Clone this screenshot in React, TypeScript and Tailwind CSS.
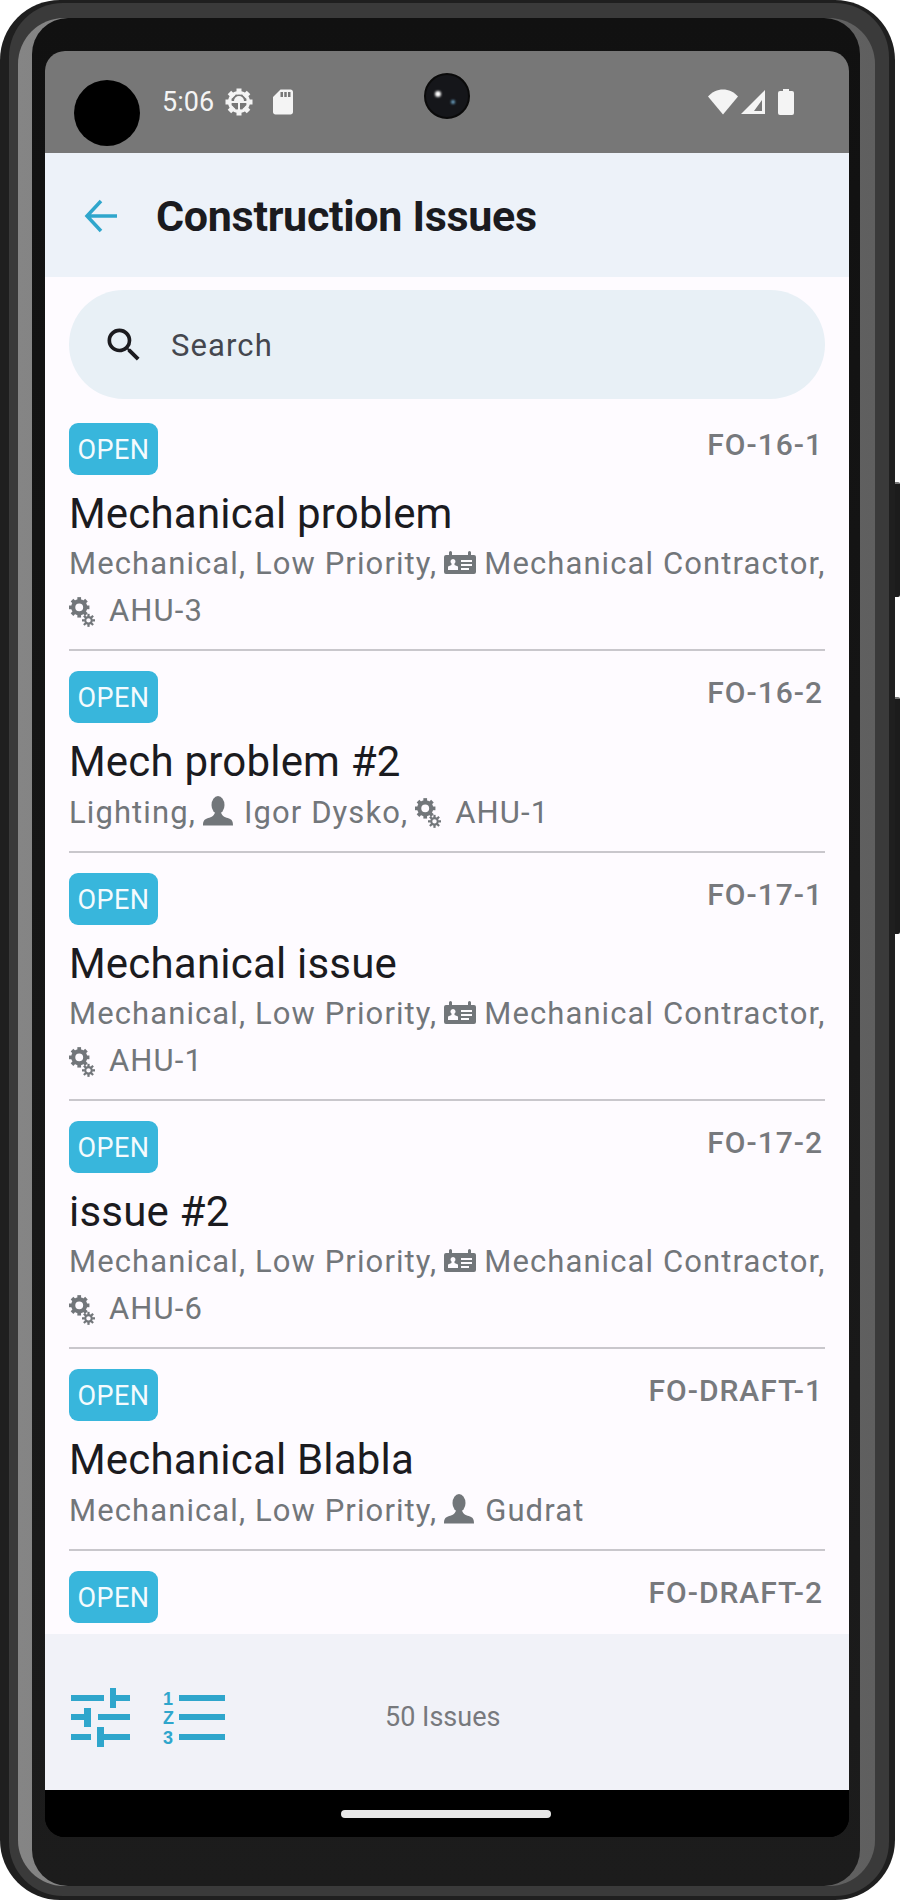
import { MdSdCard, MdSearch } from "react-icons/md";

type Meta = { kind: "text" | "card" | "user" | "gears"; label: string };

type Issue = {
  id: string;
  title: string;
  lines: Meta[][];
};

const issues: Issue[] = [
  {
    id: "FO-16-1",
    title: "Mechanical problem",
    lines: [
      [
        { kind: "text", label: "Mechanical, Low Priority," },
        { kind: "card", label: "Mechanical Contractor," },
      ],
      [{ kind: "gears", label: "AHU-3" }],
    ],
  },
  {
    id: "FO-16-2",
    title: "Mech problem #2",
    lines: [
      [
        { kind: "text", label: "Lighting," },
        { kind: "user", label: "Igor Dysko," },
        { kind: "gears", label: "AHU-1" },
      ],
    ],
  },
  {
    id: "FO-17-1",
    title: "Mechanical issue",
    lines: [
      [
        { kind: "text", label: "Mechanical, Low Priority," },
        { kind: "card", label: "Mechanical Contractor," },
      ],
      [{ kind: "gears", label: "AHU-1" }],
    ],
  },
  {
    id: "FO-17-2",
    title: "issue #2",
    lines: [
      [
        { kind: "text", label: "Mechanical, Low Priority," },
        { kind: "card", label: "Mechanical Contractor," },
      ],
      [{ kind: "gears", label: "AHU-6" }],
    ],
  },
  {
    id: "FO-DRAFT-1",
    title: "Mechanical Blabla",
    lines: [
      [
        { kind: "text", label: "Mechanical, Low Priority," },
        { kind: "user", label: "Gudrat" },
      ],
    ],
  },
];

const angles = [0, 45, 90, 135, 180, 225, 270, 315];

function CardIcon() {
  return (
    <svg width="32" height="24" viewBox="0 0 32 24" className="mr-[8px] shrink-0 -translate-y-[2px]">
      <path
        fill="#72767a"
        fillRule="evenodd"
        d="M2 4h3V1.500a1.500 1.500 0 0 1 3 0V4h16V1.500a1.500 1.500 0 0 1 3 0V4h3a2 2 0 0 1 2 2v15a2 2 0 0 1-2 2H2a2 2 0 0 1-2-2V6a2 2 0 0 1 2-2zM9 8a2.500 2.500 0 0 0-1.500 4.500V14L4 15.500V19h10v-3.500L10.500 14v-1.500A2.500 2.500 0 0 0 9 8zM17 9v2h11V9zm0 4v2h11v-2zm0 4v2h8v-2z"
      />
    </svg>
  );
}

function UserIcon() {
  return (
    <svg width="30" height="30" viewBox="0 0 30 30" fill="#72767a" className="mr-[11px] shrink-0 -translate-y-[2px]">
      <ellipse cx="15" cy="9" rx="6.500" ry="9" />
      <path d="M0 29.500c0-4 1-6 4-7 3-1 7-2 8-6h6c1 4 5 5 8 6 3 1 4 3 4 7z" />
    </svg>
  );
}

function GearsIcon() {
  return (
    <svg width="26" height="30" viewBox="0 0 28 32" className="mr-[14px] shrink-0">
      {angles.map((a) => (
        <rect key={a} x="9" y="0" width="4" height="5" fill="#72767a" transform={`rotate(${a} 11 11)`} />
      ))}
      <circle cx="11" cy="11" r="6.500" fill="none" stroke="#72767a" strokeWidth="4.500" />
      {angles.map((a) => (
        <rect key={a} x="19.800" y="18" width="2.400" height="3" fill="#72767a" transform={`rotate(${a} 21 25)`} />
      ))}
      <circle cx="21" cy="25" r="3.500" fill="none" stroke="#72767a" strokeWidth="2.200" />
    </svg>
  );
}

function MetaPiece({ item }: { item: Meta }) {
  if (item.kind === "text") return <span>{item.label}</span>;
  return (
    <span className="flex items-center">
      {item.kind === "card" && <CardIcon />}
      {item.kind === "user" && <UserIcon />}
      {item.kind === "gears" && <GearsIcon />}
      <span>{item.label}</span>
    </span>
  );
}

function IssueHead({ id }: { id: string }) {
  return (
    <div className="flex items-start justify-between">
      <span className="flex h-[52px] w-[89px] shrink-0 items-center justify-center rounded-[9px] bg-[#38b6dc] pt-[3px] text-[27px] tracking-[0.5px] text-[#f4fbfe]">
        OPEN
      </span>
      <span className="mt-[4px] mr-[2px] text-[30px] leading-[36px] font-medium tracking-[1px] text-[#77797d]">
        {id}
      </span>
    </div>
  );
}

function IssueRow({ issue }: { issue: Issue }) {
  const single = issue.lines.length === 1;
  return (
    <div className="border-b-2 border-[#c9c7cc] pt-[20px] pb-[15px]">
      <IssueHead id={issue.id} />
      <div className="mt-[13px] text-[42px] leading-[52px] tracking-[0.2px] text-[#1b1b1f]">{issue.title}</div>
      <div className="text-[31px] tracking-[1.1px] text-[#72767a]">
        {issue.lines.map((line, i) => (
          <div
            key={i}
            className={
              single
                ? "flex h-[48px] items-center gap-[7px] pt-[2px] whitespace-nowrap"
                : "flex h-[47px] items-center gap-[7px] pt-[2px] whitespace-nowrap"
            }
          >
            {line.map((item, j) => (
              <MetaPiece key={j} item={item} />
            ))}
          </div>
        ))}
      </div>
    </div>
  );
}

function FilterIcon() {
  return (
    <svg width="60" height="60" viewBox="0 0 60 60" className="mt-[12px] shrink-0 fill-[#2fa6cc]">
      <rect x="0" y="7" width="33" height="6" />
      <rect x="39" y="0" width="6" height="20" />
      <rect x="45" y="7" width="14" height="6" />
      <rect x="0" y="26" width="13" height="6" />
      <rect x="13" y="20" width="7" height="19" />
      <rect x="27" y="26" width="32" height="6" />
      <rect x="0" y="46" width="20" height="6" />
      <rect x="26" y="39" width="7" height="20" />
      <rect x="33" y="46" width="26" height="6" />
    </svg>
  );
}

function OrderIcon() {
  return (
    <svg width="62" height="60" viewBox="0 0 62 60" className="mt-[12px] ml-[32px] shrink-0 fill-[#2fa6cc]">
      <text x="0" y="17" fontSize="18" fontWeight="700" fontFamily="Liberation Sans, sans-serif">1</text>
      <text x="0" y="36" fontSize="18" fontWeight="700" fontFamily="Liberation Sans, sans-serif">Z</text>
      <text x="0" y="56" fontSize="18" fontWeight="700" fontFamily="Liberation Sans, sans-serif">3</text>
      <rect x="16" y="7" width="46" height="6" />
      <rect x="16" y="26" width="46" height="6" />
      <rect x="16" y="46" width="46" height="6" />
    </svg>
  );
}

function GearIcon() {
  return (
    <svg width="28" height="28" viewBox="0 0 28 28" className="ml-[11px] shrink-0">
      {angles.map((a) => (
        <rect key={a} x="11.500" y="0.500" width="5" height="6" fill="#f4f4f4" transform={`rotate(${a} 14 14)`} />
      ))}
      <circle cx="14" cy="14" r="9.500" fill="none" stroke="#f4f4f4" strokeWidth="3" />
      <path d="M6 14h16M14 14v8" stroke="#f4f4f4" strokeWidth="2" />
      <path d="M9 13a5 5 0 0 1 10 0z" fill="#f4f4f4" />
    </svg>
  );
}

export default function App() {
  return (
    <div className="relative h-[1900px] w-[900px] bg-white font-['Roboto',sans-serif]">
      {/* side buttons */}
      <div className="absolute top-[482px] left-[890px] h-[115px] w-[10px] rounded-r-[2px] border-t-2 border-[#777] bg-[#1c1c1c]" />
      <div className="absolute top-[697px] left-[890px] h-[237px] w-[10px] rounded-r-[2px] border-t-2 border-[#777] bg-[#1c1c1c]" />

      {/* phone shell */}
      <div className="relative h-[1900px] w-[895px] rounded-[60px] bg-[#1f1f1f] pt-[3px] pr-[6px] pb-[4px] pl-[9px]">
        <div className="h-full rounded-[54px] bg-[#3a3a3a] pt-[15px] pr-[14px] pb-[10px] pl-[9px]">
          <div className="h-full rounded-[46px] bg-linear-to-r from-[#858585] to-[#5f5f5f] pr-[15px] pl-[14px]">
            <div className="flex h-full flex-col rounded-[36px] bg-linear-to-b from-[#111111] to-[#1c1c1c] pt-[33px] pr-[11px] pb-[49px] pl-[13px]">
              {/* screen */}
              <div className="flex min-h-0 flex-1 flex-col overflow-hidden rounded-[20px] bg-black">
                {/* status bar */}
                <div className="relative flex h-[102px] shrink-0 items-center bg-[#777777] pr-[51px] pl-[117px] text-[#f4f4f4]">
                  <div className="absolute top-[29px] left-[29px] h-[66px] w-[66px] rounded-full bg-black" />
                  <div className="absolute top-[22px] left-[379px] h-[46px] w-[46px] rounded-full border-[2px] border-[#0a0a0a] bg-[#15161a]">
                    <div className="absolute top-[16px] left-[9px] h-[6px] w-[6px] rounded-full bg-white blur-[1px]" />
                    <div className="absolute top-[25px] left-[25px] h-[4px] w-[4px] rounded-full bg-[#6ea6c8] blur-[1px]" />
                  </div>
                  <span className="text-[27px] leading-none">5:06</span>
                  <GearIcon />
                  <MdSdCard className="ml-[15px] h-[30px] w-[30px]" />
                  <svg width="90" height="30" viewBox="0 0 90 30" fill="#f4f4f4" className="ml-auto">
                    <path d="M0 9.500C4 5 9.500 2.500 15 2.500S26 5 30 9.500L15 27.500z" />
                    <path fillRule="evenodd" d="M33 27 57 3v24zM46 24h8V13z" />
                    <rect x="70" y="4" width="16" height="24" rx="2" />
                    <rect x="75" y="2" width="6" height="3" />
                  </svg>
                </div>

                {/* app bar */}
                <div className="flex h-[124px] shrink-0 items-center bg-[#edf2f9] pt-[2px] pl-[39px]">
                  <svg width="34" height="34" viewBox="0 0 34 34" fill="none" stroke="#2fa6cc" strokeWidth="3.500" className="shrink-0">
                    <path d="M33 17H4M17 2 3 17l14 15" />
                  </svg>
                  <h1 className="ml-[38px] text-[43px] leading-none font-bold tracking-[-0.3px] text-[#1b1b1f]">
                    Construction Issues
                  </h1>
                </div>

                {/* list */}
                <div className="flex min-h-0 flex-1 flex-col overflow-hidden bg-[#fefbff] px-[24px] pt-[13px]">
                  <div className="mb-[4px] flex h-[109px] shrink-0 items-center rounded-full bg-[#e8f0f6] pl-[33px]">
                    <MdSearch className="h-[44px] w-[44px] text-[#1b1b1f]" />
                    <span className="ml-[25px] pt-[4px] text-[31px] tracking-[1.1px] text-[#44474e]">Search</span>
                  </div>
                  {issues.map((issue) => (
                    <IssueRow key={issue.id} issue={issue} />
                  ))}
                  <div className="pt-[20px]">
                    <IssueHead id="FO-DRAFT-2" />
                  </div>
                </div>

                {/* bottom bar */}
                <div className="flex h-[156px] shrink-0 items-center bg-[#f1f2f8] pl-[26px]">
                  <FilterIcon />
                  <OrderIcon />
                  <span className="mt-[10px] ml-[160px] text-[27px] text-[#77797d]">50 Issues</span>
                </div>

                {/* nav bar */}
                <div className="flex h-[47px] shrink-0 items-start justify-center bg-black pt-[20px]">
                  <div className="mr-[2px] h-[8px] w-[210px] rounded-full bg-[#e8e8e8]" />
                </div>
              </div>
            </div>
          </div>
        </div>
      </div>
    </div>
  );
}
